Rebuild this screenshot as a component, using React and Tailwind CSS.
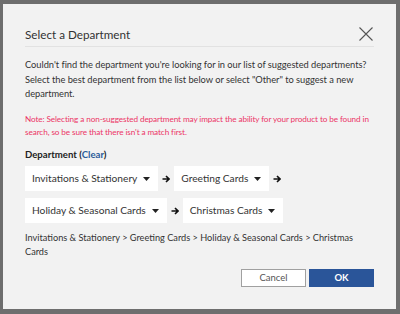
import React from 'react';

const Caret = () => (
    <svg width="7" height="4" viewBox="0 0 7 4" className="shrink-0">
        <path d="M0 0h7L3.5 4z" fill="#222" />
    </svg>
);

const Arrow = () => (
    <svg width="8" height="8" viewBox="0 0 8 8" className="shrink-0">
        <path d="M0.5 4h6M4 1l3 3-3 3" stroke="#111" strokeWidth="1.6" fill="none" />
    </svg>
);

const Dropdown = ({ label }) => (
    <div className="h-[25px] bg-white flex items-center pl-[7px] pr-[8px] gap-[6px] text-[10.2px] text-[#333]">
        <span>{label}</span>
        <Caret />
    </div>
);

const App = () => {
    const path = ['Invitations & Stationery', 'Greeting Cards', 'Holiday & Seasonal Cards', 'Christmas Cards'];

    return (
        <div className="w-[400px] h-[314px] bg-[#6e6e6e] pt-[4px] pl-[3px] font-[Lato,sans-serif]">
            <div className="w-[393px] h-[305px] bg-[#f2f2f2] px-[22px]">
                {/* Header */}
                <div className="h-[43px] pt-[23px] flex items-start justify-between border-b border-[#e2e2e2]">
                    <h2 className="text-[11.7px] leading-[14px] text-[#333]">Select a Department</h2>
                    <svg width="14" height="14" viewBox="0 0 14 14" className="mr-[1px]">
                        <path d="M0.5 0.5l13 13M13.5 0.5l-13 13" stroke="#555" strokeWidth="1.1" />
                    </svg>
                </div>

                <p className="mt-[11px] text-[9.3px] leading-[14.7px] tracking-[-0.03px] text-[#333]">
                    Couldn't find the department you're looking for in our list of suggested departments? Select the best department from the list below or select "Other" to suggest a new department.
                </p>

                <p className="mt-[11px] text-[8.2px] leading-[12.5px] tracking-[-0.1px] text-[#ec3566]">
                    Note: Selecting a non-suggested department may impact the ability for your product to be found in search, so be sure that there isn't a match first.
                </p>

                <div className="mt-[11px] text-[9.6px] leading-[12px] font-bold text-[#222]">
                    Department (<span className="text-[#2b5c9a]">Clear</span>)
                </div>

                <div className="mt-[5px] flex flex-wrap gap-y-[7px]">
                    {path.map((p, i) => (
                        <div key={p} className="flex items-center">
                            <Dropdown label={p} />
                            {i < path.length - 1 && (
                                <div className="px-[4px] flex items-center"><Arrow /></div>
                            )}
                        </div>
                    ))}
                </div>

                <p className="mt-[8px] text-[9.2px] leading-[13.5px] text-[#333]">
                    {path.join(' > ')}
                </p>

                <div className="mt-[11px] flex justify-end gap-[3px]">
                    <button className="w-[65px] h-[18px] bg-white border border-[#a0a0a0] text-[9.5px] text-[#555]">Cancel</button>
                    <button className="w-[65px] h-[18px] bg-[#2a5599] border border-[#2a5599] text-[9.5px] font-bold text-white">OK</button>
                </div>
            </div>
        </div>
    );
};

export default App;
